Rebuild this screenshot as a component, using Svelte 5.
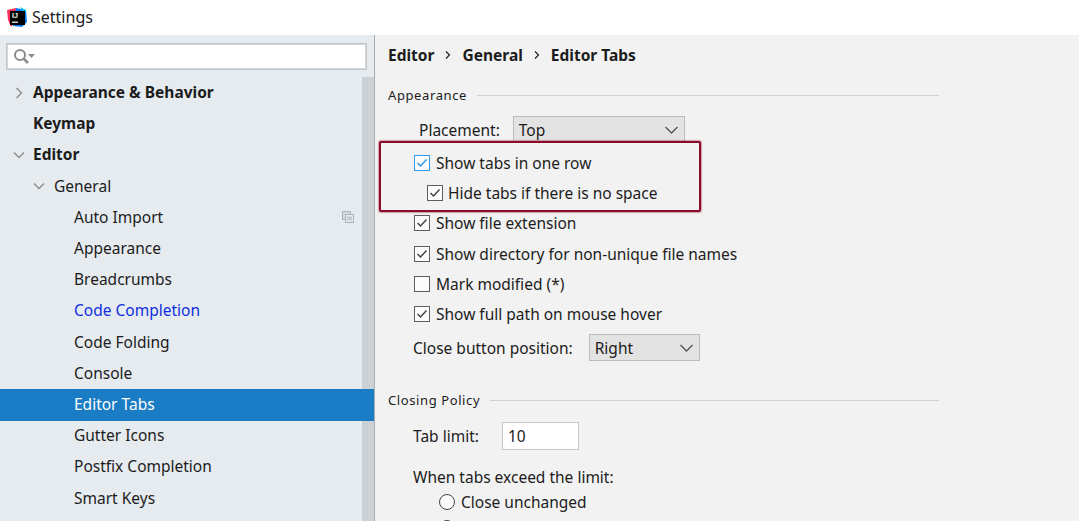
<script lang="ts">
  const tree = [
    { label: 'Appearance & Behavior', bold: true, arrow: 'right', depth: 0 },
    { label: 'Keymap', bold: true, depth: 0 },
    { label: 'Editor', bold: true, arrow: 'down', depth: 0 },
    { label: 'General', arrow: 'down', depth: 1 },
    { label: 'Auto Import', depth: 2, copy: true },
    { label: 'Appearance', depth: 2 },
    { label: 'Breadcrumbs', depth: 2 },
    { label: 'Code Completion', depth: 2, link: true },
    { label: 'Code Folding', depth: 2 },
    { label: 'Console', depth: 2 },
    { label: 'Editor Tabs', depth: 2, selected: true },
    { label: 'Gutter Icons', depth: 2 },
    { label: 'Postfix Completion', depth: 2 },
    { label: 'Smart Keys', depth: 2 },
  ];
</script>

{#snippet tick(color: string)}
  <svg width="12" height="10" viewBox="0 0 12 10" aria-hidden="true"><path d="M1.5 5 L4.5 8 L10.5 1.5" fill="none" stroke={color} stroke-width="1.5" /></svg>
{/snippet}

{#snippet chevron()}
  <svg width="13" height="8" viewBox="0 0 13 8" aria-hidden="true"><path d="M.5 1 L6.5 7 L12.5 1" fill="none" stroke="#555" stroke-width="1.3" /></svg>
{/snippet}

{#snippet sep()}
  <svg width="6" height="8" viewBox="0 0 6 8" aria-hidden="true"><path d="M1 .5 L4.5 4 L1 7.5" fill="none" stroke="#222" stroke-width="1.2" /></svg>
{/snippet}

<div class="window">
  <header class="titlebar">
    <svg class="logo" width="20" height="21" viewBox="0 0 20 21" aria-hidden="true">
      <path d="M0 3 L9 1 L12 9 L4 20 L1 13 Z" fill="#fe315d" />
      <path d="M9 1 L19 3 L20 15 L15 20 L6 19 Z" fill="#087cfa" />
      <path d="M13 0 L19 3 L18 8 Z" fill="#07c3f2" />
      <rect x="3" y="4" width="15" height="14" fill="#000" />
      <text x="5" y="10.5" class="logo-text">IJ</text>
      <rect x="5" y="14.6" width="6" height="1.2" fill="#fff" />
    </svg>
    <span class="title">Settings</span>
  </header>

  <div class="body">
    <aside class="sidebar">
      <div class="search">
        <svg width="24" height="18" viewBox="0 0 24 18" aria-hidden="true">
          <circle cx="7" cy="7" r="5" fill="none" stroke="#8c8c8c" stroke-width="2" />
          <path d="M10.5 10.5 L15 15" stroke="#8c8c8c" stroke-width="2.6" />
          <path d="M15 6 L22 6 L18.5 10 Z" fill="#8c8c8c" />
        </svg>
      </div>
      <div class="tree-wrap">
        <ul class="tree">
          {#each tree as item}
            <li
              class="node depth-{item.depth}"
              class:bold={item.bold}
              class:link={item.link}
              class:selected={item.selected}
            >
              {#if item.arrow}
                <svg class="arrow" width="12" height="12" viewBox="0 0 12 12" aria-hidden="true">
                  {#if item.arrow === 'right'}
                    <path d="M3.5 1 L8.5 6 L3.5 11" fill="none" stroke="#8f8f8f" stroke-width="1.5" />
                  {:else}
                    <path d="M1 3.5 L6 8.5 L11 3.5" fill="none" stroke="#8f8f8f" stroke-width="1.5" />
                  {/if}
                </svg>
              {/if}
              <span>{item.label}</span>
              {#if item.copy}
                <svg class="copy" width="12" height="12" viewBox="0 0 12 12" aria-hidden="true">
                  <rect x="0.5" y="0.5" width="8" height="8" fill="#d4dae0" stroke="#a9b5bf" />
                  <rect x="3.5" y="3.5" width="8" height="8" fill="#e6ebf0" stroke="#a9b5bf" />
                  <rect x="5" y="5.5" width="5" height="4" fill="#c3ccd4" />
                </svg>
              {/if}
            </li>
          {/each}
        </ul>
        <div class="scrollbar"></div>
      </div>
    </aside>

    <main class="content">
      <nav class="crumbs">
        <span>Editor</span>
        {@render sep()}
        <span>General</span>
        {@render sep()}
        <span>Editor Tabs</span>
      </nav>

      <section class="group appearance">
        <div class="legend"><span>Appearance</span><i></i></div>
        <div class="field placement">
          <span>Placement:</span>
          <div class="combo wide">
            <span>Top</span>
            {@render chevron()}
          </div>
        </div>

        <div class="check"><span class="box blue">{@render tick('#2f9bef')}</span>Show tabs in one row</div>
        <div class="check indent"><span class="box">{@render tick('#444')}</span>Hide tabs if there is no space</div>
        <div class="check"><span class="box">{@render tick('#444')}</span>Show file extension</div>
        <div class="check"><span class="box">{@render tick('#444')}</span>Show directory for non-unique file names</div>
        <div class="check"><span class="box"></span>Mark modified (*)</div>
        <div class="check"><span class="box">{@render tick('#444')}</span>Show full path on mouse hover</div>

        <div class="field close-pos">
          <span>Close button position:</span>
          <div class="combo narrow">
            <span>Right</span>
            {@render chevron()}
          </div>
        </div>
      </section>

      <section class="group closing">
        <div class="legend"><span>Closing Policy</span><i></i></div>
        <div class="field limit">
          <span>Tab limit:</span>
          <div class="input">10</div>
        </div>
        <div class="when">When tabs exceed the limit:</div>
        <div class="radio"><span class="dot"></span>Close unchanged</div>
        <div class="radio"><span class="dot"></span></div>
      </section>

      <div class="highlight"></div>
    </main>
  </div>
</div>

<style>
  :global(body) {
    margin: 0;
    overflow: hidden;
  }

  .window {
    width: 1079px;
    height: 521px;
    overflow: hidden;
    display: flex;
    flex-direction: column;
    font-family: "Noto Sans", "Open Sans", sans-serif;
    font-size: 15.5px;
    color: #1c1c1c;
    background: #f2f2f2;
  }

  .titlebar {
    flex: 0 0 35px;
    display: flex;
    align-items: center;
    gap: 5px;
    padding-left: 7px;
    background: #fff;
  }

  .logo-text {
    font-family: "Liberation Sans", sans-serif;
    font-size: 7px;
    font-weight: 700;
    fill: #fff;
  }

  .title {
    position: relative;
    top: -1px;
    font-size: 16px;
  }

  .body {
    flex: 1;
    display: flex;
    min-height: 0;
  }

  .sidebar {
    flex: 0 0 374px;
    background: #e6ebf0;
    border-right: 1px solid #a9adb0;
    display: flex;
    flex-direction: column;
  }

  .search {
    margin: 8px 7px 0 6px;
    height: 27px;
    box-sizing: border-box;
    background: #fff;
    border: 1px solid #c4c7c9;
    outline: 1px solid #d2d6d9;
    outline-offset: -2px;
    display: flex;
    align-items: center;
    padding: 1px 0 0 6px;
  }

  .tree-wrap {
    flex: 1;
    display: flex;
    min-height: 0;
    margin-top: 7px;
  }

  .tree {
    flex: 1;
    margin: 0;
    padding: 0.5px 0 0;
    list-style: none;
    min-width: 0;
  }

  .scrollbar {
    flex: 0 0 12px;
    background: #ccd1d5;
  }

  .node {
    height: 31.2px;
    display: flex;
    align-items: center;
    position: relative;
    margin-right: -12px;
    padding-bottom: 2px;
    box-sizing: border-box;
  }

  .node.depth-0 { padding-left: 33px; }
  .node.depth-1 { padding-left: 54px; }
  .node.depth-2 { padding-left: 74px; }
  .node.bold { font-weight: 700; }
  .node.link { color: #0f2fe0; }

  .node.selected {
    background: #1a7cc4;
    color: #fff;
  }

  .arrow {
    position: absolute;
    top: 9px;
  }

  .depth-0 .arrow { left: 13px; }
  .depth-1 .arrow { left: 33px; }

  .copy {
    position: absolute;
    left: 342px;
    top: 9px;
  }

  .content {
    flex: 1;
    position: relative;
    padding: 0 0 0 13px;
    min-width: 0;
  }

  .crumbs {
    display: flex;
    align-items: center;
    height: 40px;
    font-weight: 700;
    gap: 11px;
  }

  .group {
    width: 551px;
  }

  .legend {
    display: flex;
    align-items: center;
    gap: 10px;
    height: 20px;
    font-size: 13px;
    letter-spacing: 0.6px;
  }

  .legend i {
    flex: 1;
    height: 1px;
    background: #d0d0d0;
  }

  .appearance .legend { margin-top: 10px; }

  .field {
    display: flex;
    align-items: center;
  }

  .placement {
    margin: 11px 0 5px 31px;
    gap: 13px;
  }

  .combo {
    height: 27px;
    box-sizing: border-box;
    border: 1px solid #bcbcbc;
    background: #e3e3e3;
    display: flex;
    align-items: center;
    justify-content: space-between;
    padding: 0 6px 0 5px;
  }

  .combo.wide { width: 172px; }
  .combo.narrow { width: 111px; }

  .check {
    height: 30.2px;
    display: flex;
    align-items: center;
    gap: 6px;
    padding-left: 26px;
  }

  .check.indent {
    padding-left: 39px;
    gap: 5px;
  }

  .box {
    width: 16px;
    height: 16px;
    box-sizing: border-box;
    border: 1px solid #5e5e5e;
    display: flex;
    align-items: center;
    justify-content: center;
    background: #fcfcfc;
  }

  .box.blue {
    border-color: #2f9bef;
  }

  .close-pos {
    margin: 5px 0 0 25px;
    gap: 16px;
  }

  .closing {
    margin-top: 29px;
  }

  .limit {
    margin: 12px 0 0 25px;
    gap: 23px;
  }

  .input {
    width: 77px;
    height: 28px;
    box-sizing: border-box;
    background: #fff;
    border: 1px solid #c6c6c6;
    padding-left: 5px;
    display: flex;
    align-items: center;
  }

  .when {
    margin: 15px 0 0 25px;
    height: 24px;
    display: flex;
    align-items: center;
  }

  .radio {
    height: 26px;
    display: flex;
    align-items: center;
    gap: 6px;
    padding-left: 51px;
  }

  .dot {
    width: 16px;
    height: 16px;
    box-sizing: border-box;
    border: 1px solid #444;
    border-radius: 50%;
    background: #fcfcfc;
  }

  .highlight {
    position: absolute;
    left: 4px;
    top: 106px;
    width: 322px;
    height: 71px;
    box-sizing: border-box;
    border: 2px solid #8c0a2c;
    border-radius: 2px;
    box-shadow: 0 0 1px 1px rgba(140, 10, 44, 0.35);
  }
</style>
